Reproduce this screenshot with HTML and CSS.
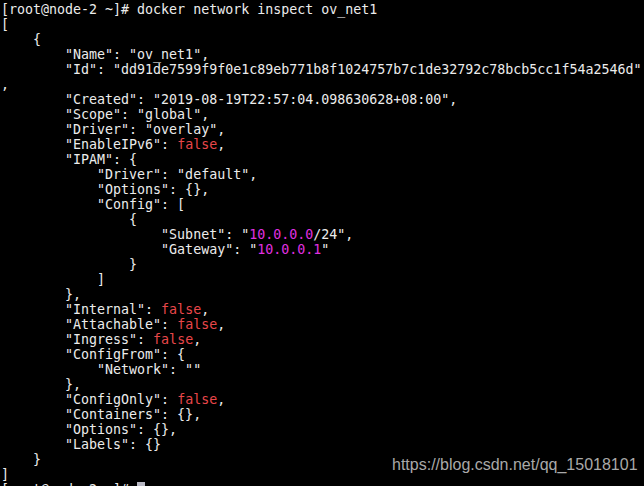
FILE: index.html
```html
<!DOCTYPE html>
<html>
<head>
<meta charset="utf-8">
<link rel="stylesheet" href="styles.css">
</head>
<body>
<div class="term">
<pre class="out">[root@node-2 ~]# docker network inspect ov_net1
[
    {
        "Name": "ov_net1",
        "Id": "dd91de7599f9f0e1c89eb771b8f1024757b7c1de32792c78bcb5cc1f54a2546d"
,
        "Created": "2019-08-19T22:57:04.098630628+08:00",
        "Scope": "global",
        "Driver": "overlay",
        "EnableIPv6": <span class="f">false</span>,
        "IPAM": {
            "Driver": "default",
            "Options": {},
            "Config": [
                {
                    "Subnet": "<span class="n">10.0.0.0</span>/24",
                    "Gateway": "<span class="n">10.0.0.1</span>"
                }
            ]
        },
        "Internal": <span class="f">false</span>,
        "Attachable": <span class="f">false</span>,
        "Ingress": <span class="f">false</span>,
        "ConfigFrom": {
            "Network": ""
        },
        "ConfigOnly": <span class="f">false</span>,
        "Containers": {},
        "Options": {},
        "Labels": {}
    }
]
[root@node-2 ~]# <span class="cur"> </span></pre>
<div class="wm">https://blog.csdn.net/qq_15018101</div>
</div>
</body>
</html>
```

FILE: styles.css
```css
html, body {
  margin: 0;
  padding: 0;
  background: #000;
}
.term {
  position: relative;
  width: 644px;
  height: 486px;
  overflow: hidden;
  background: #000;
}
.out {
  margin: 0;
  padding: 2px 0 0 1px;
  font-family: "DejaVu Sans Mono", "Liberation Mono", monospace;
  font-size: 13.3px;
  line-height: 15px;
  color: #ececec;
  white-space: pre;
}
.f {
  color: #e8474a;
}
.n {
  color: #e030e0;
}
.cur {
  background: #b8b8c4;
}
.wm {
  position: absolute;
  left: 392px;
  top: 456px;
  font-family: "Liberation Sans", Arial, sans-serif;
  font-size: 16px;
  color: #a9a9a9;
  white-space: nowrap;
}
```
